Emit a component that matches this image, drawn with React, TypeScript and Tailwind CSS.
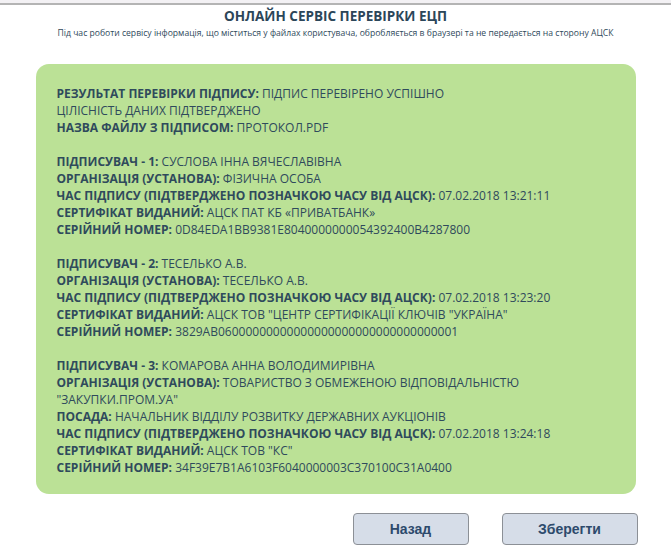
import React from "react";

type Field = { label: string; value: string };

const blocks: Field[][] = [
  [
    { label: "РЕЗУЛЬТАТ ПЕРЕВІРКИ ПІДПИСУ:", value: "ПІДПИС ПЕРЕВІРЕНО УСПІШНО" },
    { label: "", value: "ЦІЛІСНІСТЬ ДАНИХ ПІДТВЕРДЖЕНО" },
    { label: "НАЗВА ФАЙЛУ З ПІДПИСОМ:", value: "ПРОТОКОЛ.PDF" },
  ],
  [
    { label: "ПІДПИСУВАЧ - 1:", value: "СУСЛОВА ІННА ВЯЧЕСЛАВІВНА" },
    { label: "ОРГАНІЗАЦІЯ (УСТАНОВА):", value: "ФІЗИЧНА ОСОБА" },
    { label: "ЧАС ПІДПИСУ (ПІДТВЕРДЖЕНО ПОЗНАЧКОЮ ЧАСУ ВІД АЦСК):", value: "07.02.2018 13:21:11" },
    { label: "СЕРТИФІКАТ ВИДАНИЙ:", value: "АЦСК ПАТ КБ «ПРИВАТБАНК»" },
    { label: "СЕРІЙНИЙ НОМЕР:", value: "0D84EDA1BB9381E8040000000054392400B4287800" },
  ],
  [
    { label: "ПІДПИСУВАЧ - 2:", value: "ТЕСЕЛЬКО А.В." },
    { label: "ОРГАНІЗАЦІЯ (УСТАНОВА):", value: "ТЕСЕЛЬКО А.В." },
    { label: "ЧАС ПІДПИСУ (ПІДТВЕРДЖЕНО ПОЗНАЧКОЮ ЧАСУ ВІД АЦСК):", value: "07.02.2018 13:23:20" },
    { label: "СЕРТИФІКАТ ВИДАНИЙ:", value: 'АЦСК ТОВ "ЦЕНТР СЕРТИФІКАЦІЇ КЛЮЧІВ "УКРАЇНА"' },
    { label: "СЕРІЙНИЙ НОМЕР:", value: "3829AB06000000000000000000000000000000001" },
  ],
  [
    { label: "ПІДПИСУВАЧ - 3:", value: "КОМАРОВА АННА ВОЛОДИМИРІВНА" },
    { label: "ОРГАНІЗАЦІЯ (УСТАНОВА):", value: 'ТОВАРИСТВО З ОБМЕЖЕНОЮ ВІДПОВІДАЛЬНІСТЮ "ЗАКУПКИ.ПРОМ.УА"' },
    { label: "ПОСАДА:", value: "НАЧАЛЬНИК ВІДДІЛУ РОЗВИТКУ ДЕРЖАВНИХ АУКЦІОНІВ" },
    { label: "ЧАС ПІДПИСУ (ПІДТВЕРДЖЕНО ПОЗНАЧКОЮ ЧАСУ ВІД АЦСК):", value: "07.02.2018 13:24:18" },
    { label: "СЕРТИФІКАТ ВИДАНИЙ:", value: 'АЦСК ТОВ "КС"' },
    { label: "СЕРІЙНИЙ НОМЕР:", value: "34F39E7B1A6103F6040000003C370100C31A0400" },
  ],
];

export default function App() {
  return (
    <div className="min-h-screen bg-white font-['Open_Sans',sans-serif] text-[#2f4a5c]">
      {/* browser-ish top strip */}
      <div className="h-[5px] bg-[#f3f1f4] border-b-2 border-[#b4b4b4]" />

      <div className="w-[600px] mx-auto">
        <h1 className="text-center font-bold text-[13.5px] leading-[18px] mt-[2px] text-[#2c4659]">
          ОНЛАЙН СЕРВІС ПЕРЕВІРКИ ЕЦП
        </h1>
        <p className="text-center text-[8.6px] leading-[12px] mt-[2px] whitespace-nowrap">
          Під час роботи сервісу інформація, що міститься у файлах користувача, обробляється в браузері та не передається на сторону АЦСК
        </p>

        <div className="mt-[25px] bg-[#bbe196] rounded-[13px] h-[430px] pl-[21px] pr-4 pt-[21px] text-[12px] leading-[17px]">
          {blocks.map((block, i) => (
            <div key={i} className={i > 0 ? "mt-[17px]" : ""}>
              {block.map((f, j) => (
                <div key={j}>
                  {f.label && <span className="font-bold">{f.label} </span>}
                  {f.value}
                </div>
              ))}
            </div>
          ))}
        </div>

        <div className="flex justify-end gap-[33px] mt-[19px] -mr-[2px]">
          <button className="w-[116px] h-[32px] rounded-[4px] border border-[#8c9096] bg-[#d6dde8] font-['Liberation_Sans',sans-serif] font-bold text-[14px] text-[#2d4a6c]">
            Назад
          </button>
          <button className="w-[136px] h-[32px] rounded-[4px] border border-[#8c9096] bg-[#d6dde8] font-['Liberation_Sans',sans-serif] font-bold text-[14px] text-[#2d4a6c]">
            Зберегти
          </button>
        </div>
      </div>
    </div>
  );
}
